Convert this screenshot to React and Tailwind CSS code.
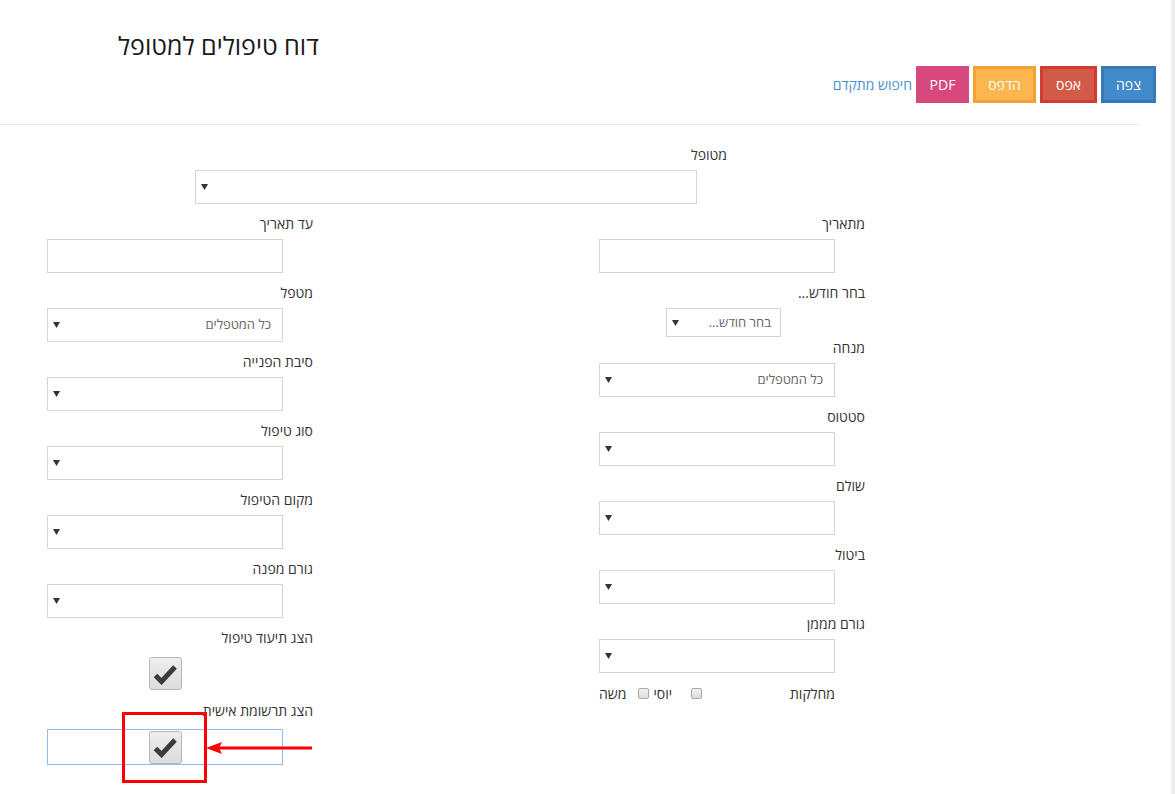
import React from 'react';

const font = { fontFamily: '"Open Sans", "DejaVu Sans", sans-serif' };

const Arrow = () => (
      <svg width="7" height="6" viewBox="0 0 7 6" className="shrink-0">
            <path d="M0 0 H7 L3.5 6 Z" fill="#333" />
      </svg>
);

const Select = ({ value, className = 'h-[34px] w-[236px]' }) => (
      <div className={`${className} mr-[30px] flex items-center justify-between border border-[#d5d5d5] bg-white pl-[5px] pr-[11px] text-[13px] text-[#666]`}>
            <span>{value}</span>
            <Arrow />
      </div>
);

const Input = () => <div className="mr-[30px] h-[34px] w-[236px] border border-[#d5d5d5] bg-white" />;

const Label = ({ children }) => (
      <div className="h-[20px] text-[14px] leading-[20px] text-[#333]">{children}</div>
);

const Field = ({ label, children, last = 'mb-[10px]' }) => (
      <div className={last}>
            <Label>{label}</Label>
            <div className="mt-[5px]">{children}</div>
      </div>
);

const BigCheck = () => (
      <div className="flex h-[33px] w-[33px] items-center justify-center rounded-[3px] border border-[#b5b5b5] bg-gradient-to-b from-[#eeeeee] to-[#dcdcdc]">
            <svg width="25" height="22" viewBox="0 0 25 22">
                  <path d="M2.5 12.5 L8.5 18.5 L22 4" fill="none" stroke="#3b3b3b" strokeWidth="5" strokeLinejoin="miter" />
            </svg>
      </div>
);

const SmallCheck = () => (
      <span className="inline-block h-[11px] w-[11px] rounded-[2px] border border-[#aaa] bg-gradient-to-b from-[#f2f2f2] to-[#dddddd]" />
);

const Btn = ({ children, className }) => (
      <button className={`h-[37px] border-[3px] text-[14px] text-white ${className}`}>{children}</button>
);

export default function App() {
      return (
            <div style={font} className="relative min-h-[794px] w-[1175px] border-r-4 border-[#efefef] bg-white">
                  {/* header */}
                  <div className="flex pl-[118px] pt-[30px]">
                        <h1 className="h-[30px] text-[25px] leading-[30px] font-normal text-[#1a1a1a]" dir="rtl">דוח טיפולים למטופל</h1>
                  </div>
                  <div className="mt-[6px] flex items-center justify-end gap-1 pr-[15px]">
                        <a className="text-[14px] text-[#4a8fd0]" dir="rtl">חיפוש מתקדם</a>
                        <Btn className="w-[53px] border-[#d6487e] bg-[#d6487e]">PDF</Btn>
                        <Btn className="w-[63px] border-[#f0a232] bg-[#fdb54f]">הדפס</Btn>
                        <Btn className="w-[57px] border-[#d33b34] bg-[#d15b47]">אפס</Btn>
                        <Btn className="w-[55px] border-[#3779b8] bg-[#428bca]">צפה</Btn>
                  </div>
                  <div className="mt-[21px] w-[1140px] border-t border-[#e8e8e8]" />

                  {/* form */}
                  <div dir="rtl" className="pt-[20px]">
                        <div className="w-[976px] pr-[444px]">
                              <Field label="מטופל">
                                    <Select className="h-[34px] w-[502px]" />
                              </Field>
                        </div>

                        <div className="flex gap-[286px] pr-[306px]">
                              {/* right column */}
                              <div className="w-[266px]">
                                    <Field label="מתאריך">
                                          <Input />
                                    </Field>
                                    <div className="mb-[1px]">
                                          <Label>בחר חודש...</Label>
                                          <div className="mt-[5px]">
                                                <div className="mr-[84px] flex h-[29px] w-[115px] items-center justify-between border border-[#d5d5d5] pl-[5px] pr-[9px] text-[13px] text-[#666]">
                                                      <span>בחר חודש...</span>
                                                      <Arrow />
                                                </div>
                                          </div>
                                    </div>
                                    <Field label="מנחה">
                                          <Select value="כל המטפלים" />
                                    </Field>
                                    <Field label="סטטוס">
                                          <Select />
                                    </Field>
                                    <Field label="שולם">
                                          <Select />
                                    </Field>
                                    <Field label="ביטול">
                                          <Select />
                                    </Field>
                                    <Field label="גורם מממן">
                                          <Select />
                                    </Field>
                                    <div className="mr-[30px] flex h-[20px] w-[236px] items-center text-[14px] text-[#333]">
                                          <span className="ml-auto">מחלקות</span>
                                          <SmallCheck />
                                          <span className="mr-[19px] ml-[4px]">יוסי</span>
                                          <SmallCheck />
                                          <span className="mr-[12px]">משה</span>
                                    </div>
                              </div>

                              {/* left column */}
                              <div className="w-[266px]">
                                    <Field label="עד תאריך">
                                          <Input />
                                    </Field>
                                    <Field label="מטפל">
                                          <Select value="כל המטפלים" />
                                    </Field>
                                    <Field label="סיבת הפנייה">
                                          <Select />
                                    </Field>
                                    <Field label="סוג טיפול">
                                          <Select />
                                    </Field>
                                    <Field label="מקום הטיפול">
                                          <Select />
                                    </Field>
                                    <Field label="גורם מפנה">
                                          <Select />
                                    </Field>
                                    <div className="mb-[11px]">
                                          <Label>הצג תיעוד טיפול</Label>
                                          <div className="mr-[30px] mt-[9px] flex w-[236px] justify-center">
                                                <BigCheck />
                                          </div>
                                    </div>
                                    <div>
                                          <Label>הצג תרשומת אישית</Label>
                                          <div className="mr-[30px] mt-[8px] flex h-[36px] w-[236px] items-center justify-center border border-[#94bbf0]">
                                                <BigCheck />
                                          </div>
                                    </div>
                              </div>
                        </div>
                  </div>

                  {/* annotation */}
                  <div className="absolute left-[122px] top-[712px] h-[71px] w-[85px] border-[3px] border-[#ff0000]" />
                  <svg className="absolute left-[206px] top-[740px]" width="108" height="16" viewBox="0 0 108 16">
                        <line x1="12" y1="8" x2="106" y2="8" stroke="#ff0000" strokeWidth="3" />
                        <path d="M0 8 L16 2 L13 8 L16 14 Z" fill="#ff0000" />
                  </svg>
            </div>
      );
}
